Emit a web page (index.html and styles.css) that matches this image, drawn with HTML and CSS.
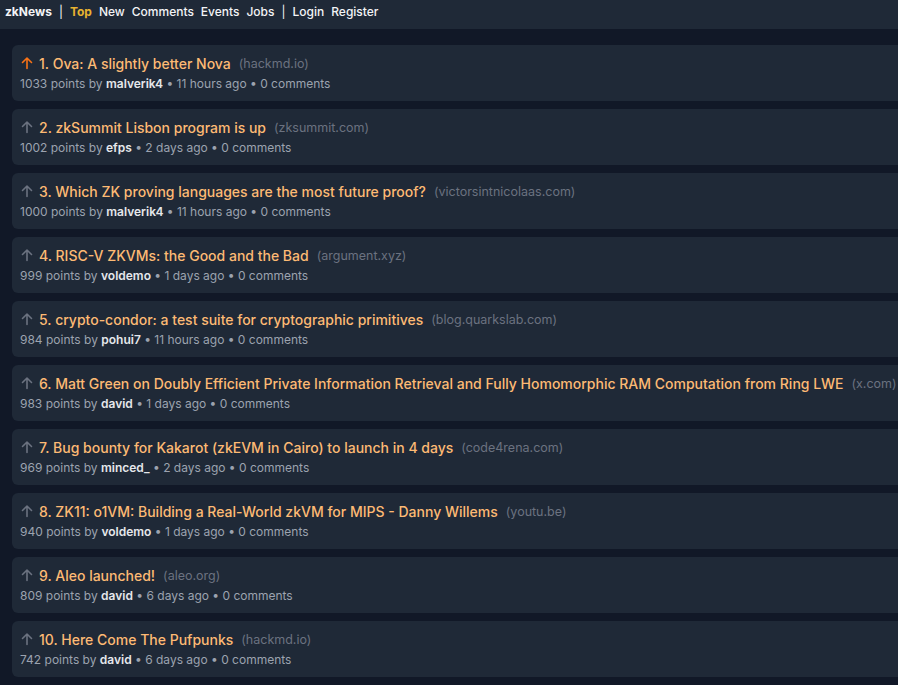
FILE: index.html
```html
<!DOCTYPE html>
<html lang="en">
<head>
    <meta charset="UTF-8">
    <meta name="viewport" content="width=device-width, initial-scale=1.0">
    <title>zkNews</title>
    <link rel="stylesheet" href="styles.css">
</head>
<body>
    <nav class="topbar">
        <a href="#" class="brand">zkNews</a>
        <span class="sep">|</span>
        <a href="#" class="active">Top</a>
        <a href="#">New</a>
        <a href="#">Comments</a>
        <a href="#">Events</a>
        <a href="#">Jobs</a>
        <span class="sep">|</span>
        <a href="#">Login</a>
        <a href="#">Register</a>
    </nav>

    <div class="stories">
        <div class="story">
            <div class="title-row">
                <svg class="vote voted" viewBox="0 0 14 14"><path d="M7 12.5V2M2.5 6.5L7 2l4.5 4.5"/></svg>
                <a href="#" class="title">1. Ova: A slightly better Nova</a>
                <span class="domain">(hackmd.io)</span>
            </div>
            <div class="meta">1033 points by <b>malverik4</b> • 11 hours ago • 0 comments</div>
        </div>
        <div class="story">
            <div class="title-row">
                <svg class="vote" viewBox="0 0 14 14"><path d="M7 12.5V2M2.5 6.5L7 2l4.5 4.5"/></svg>
                <a href="#" class="title">2. zkSummit Lisbon program is up</a>
                <span class="domain">(zksummit.com)</span>
            </div>
            <div class="meta">1002 points by <b>efps</b> • 2 days ago • 0 comments</div>
        </div>
        <div class="story">
            <div class="title-row">
                <svg class="vote" viewBox="0 0 14 14"><path d="M7 12.5V2M2.5 6.5L7 2l4.5 4.5"/></svg>
                <a href="#" class="title">3. Which ZK proving languages are the most future proof?</a>
                <span class="domain">(victorsintnicolaas.com)</span>
            </div>
            <div class="meta">1000 points by <b>malverik4</b> • 11 hours ago • 0 comments</div>
        </div>
        <div class="story">
            <div class="title-row">
                <svg class="vote" viewBox="0 0 14 14"><path d="M7 12.5V2M2.5 6.5L7 2l4.5 4.5"/></svg>
                <a href="#" class="title">4. RISC-V ZKVMs: the Good and the Bad</a>
                <span class="domain">(argument.xyz)</span>
            </div>
            <div class="meta">999 points by <b>voldemo</b> • 1 days ago • 0 comments</div>
        </div>
        <div class="story">
            <div class="title-row">
                <svg class="vote" viewBox="0 0 14 14"><path d="M7 12.5V2M2.5 6.5L7 2l4.5 4.5"/></svg>
                <a href="#" class="title">5. crypto-condor: a test suite for cryptographic primitives</a>
                <span class="domain">(blog.quarkslab.com)</span>
            </div>
            <div class="meta">984 points by <b>pohui7</b> • 11 hours ago • 0 comments</div>
        </div>
        <div class="story">
            <div class="title-row">
                <svg class="vote" viewBox="0 0 14 14"><path d="M7 12.5V2M2.5 6.5L7 2l4.5 4.5"/></svg>
                <a href="#" class="title">6. Matt Green on Doubly Efficient Private Information Retrieval and Fully Homomorphic RAM Computation from Ring LWE</a>
                <span class="domain">(x.com)</span>
            </div>
            <div class="meta">983 points by <b>david</b> • 1 days ago • 0 comments</div>
        </div>
        <div class="story">
            <div class="title-row">
                <svg class="vote" viewBox="0 0 14 14"><path d="M7 12.5V2M2.5 6.5L7 2l4.5 4.5"/></svg>
                <a href="#" class="title">7. Bug bounty for Kakarot (zkEVM in Cairo) to launch in 4 days</a>
                <span class="domain">(code4rena.com)</span>
            </div>
            <div class="meta">969 points by <b>minced_</b> • 2 days ago • 0 comments</div>
        </div>
        <div class="story">
            <div class="title-row">
                <svg class="vote" viewBox="0 0 14 14"><path d="M7 12.5V2M2.5 6.5L7 2l4.5 4.5"/></svg>
                <a href="#" class="title">8. ZK11: o1VM: Building a Real-World zkVM for MIPS - Danny Willems</a>
                <span class="domain">(youtu.be)</span>
            </div>
            <div class="meta">940 points by <b>voldemo</b> • 1 days ago • 0 comments</div>
        </div>
        <div class="story">
            <div class="title-row">
                <svg class="vote" viewBox="0 0 14 14"><path d="M7 12.5V2M2.5 6.5L7 2l4.5 4.5"/></svg>
                <a href="#" class="title">9. Aleo launched!</a>
                <span class="domain">(aleo.org)</span>
            </div>
            <div class="meta">809 points by <b>david</b> • 6 days ago • 0 comments</div>
        </div>
        <div class="story">
            <div class="title-row">
                <svg class="vote" viewBox="0 0 14 14"><path d="M7 12.5V2M2.5 6.5L7 2l4.5 4.5"/></svg>
                <a href="#" class="title">10. Here Come The Pufpunks</a>
                <span class="domain">(hackmd.io)</span>
            </div>
            <div class="meta">742 points by <b>david</b> • 6 days ago • 0 comments</div>
        </div>
    </div>
</body>
</html>
```

FILE: styles.css
```css
body {
    font-family: Inter, "Liberation Sans", sans-serif;
    background-color: #111827;
    margin: 0;
    padding: 0;
    color: #9ca3af;
    overflow: hidden;
}
.topbar {
    background-color: #1f2937;
    height: 29px;
    box-sizing: border-box;
    display: flex;
    align-items: flex-start;
    gap: 7px;
    padding: 4px 5px 0;
    font-size: 12px;
    line-height: 16px;
}
.topbar a {
    color: #f3f4f6;
    text-decoration: none;
    font-weight: 500;
}
.topbar .brand {
    font-weight: 700;
}
.topbar .active {
    color: #e8b330;
    font-weight: 700;
}
.topbar .sep {
    color: #f3f4f6;
}
.stories {
    padding: 16px 0 0 12px;
    display: flex;
    flex-direction: column;
    gap: 8px;
}
.story {
    background-color: #1f2937;
    border-radius: 6px;
    padding: 8px 8px;
    width: 900px;
}
.title-row {
    display: flex;
    align-items: center;
    height: 20px;
    white-space: nowrap;
}
.vote {
    width: 14px;
    height: 14px;
    margin-right: 5px;
    fill: none;
    stroke: #6b7280;
    stroke-width: 1.6;
    stroke-linecap: round;
    stroke-linejoin: round;
}
.vote.voted {
    stroke: #f97316;
}
.title {
    color: #fdba74;
    text-decoration: none;
    font-size: 14px;
    font-weight: 500;
}
.domain {
    color: #6b7280;
    font-size: 12.5px;
    margin-left: 8px;
}
.meta {
    font-size: 12px;
    line-height: 18px;
    margin-top: 2px;
    white-space: nowrap;
}
.meta b {
    color: #e5e7eb;
    font-weight: 600;
}
```
